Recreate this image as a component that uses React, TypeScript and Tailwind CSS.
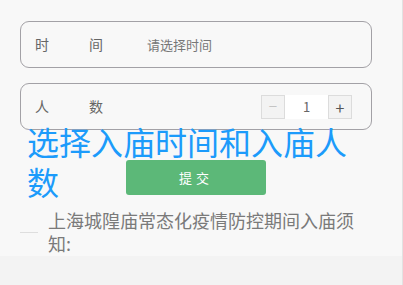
import { useState } from "react";

const font = { fontFamily: '"Noto Sans CJK SC", "Noto Sans", sans-serif' };

function Label({ a, b }: { a: string; b: string }) {
  return (
    <div className="flex w-[68px] justify-between text-[14px] text-[#666]">
      <span>{a}</span>
      <span>{b}</span>
    </div>
  );
}

export default function App() {
  const [count, setCount] = useState(1);

  return (
    <div style={font} className="relative h-[285px] w-[403px] overflow-hidden border-r border-[#e2e2e2] bg-[#f3f3f3]">
      <div className="bg-[#f8f8f8] pb-[1px] pl-5 pr-[30px] pt-[21px]">
        <div className="flex h-[47px] items-center rounded-[9px] border border-[#a3a1a6] pl-[14px]">
          <Label a="时" b="间" />
          <span className="ml-[44px] text-[13px] text-[#777]">请选择时间</span>
        </div>

        <div className="mt-[15px] flex h-[47px] items-center rounded-[9px] border border-[#a3a1a6] pl-[14px] pr-[19px]">
          <Label a="人" b="数" />
          <div className="ml-auto flex h-6 items-center">
            <button
              className="flex h-6 w-6 items-center justify-center border border-[#dcdcdc] bg-[#f3f3f3] text-[15px] text-[#c4c4c4]"
              onClick={() => setCount(Math.max(1, count - 1))}
            >
              −
            </button>
            <div className="flex h-6 w-[43px] items-center justify-center bg-white text-[13px] text-[#666]">{count}</div>
            <button
              className="flex h-6 w-6 items-center justify-center border border-[#dcdcdc] bg-[#f3f3f3] text-[16px] text-[#555]"
              onClick={() => setCount(count + 1)}
            >
              +
            </button>
          </div>
        </div>

        <button className="mx-auto mt-[30px] flex h-[35px] w-[40%] items-center justify-center rounded-[3px] bg-[#5cb878] text-[13px] tracking-[4px] text-white">
          提交
        </button>

        <div className="mt-[14px] flex items-center">
          <div className="h-px w-[18px] bg-[#dedede]" />
          <p className="ml-[10px] w-[315px] text-[18px] leading-[23px] text-[#7a7a7a]">
            上海城隍庙常态化疫情防控期间入庙须知:
          </p>
        </div>
      </div>

      {/* heading spills over the form, as in the page */}
      <h1 className="absolute left-[27px] top-[121px] text-[32px] leading-[40px] text-[#1c9bfb]">
        <span className="block w-fit">选择入庙时间和入庙人</span>
        <span className="block w-fit">数</span>
      </h1>
    </div>
  );
}
